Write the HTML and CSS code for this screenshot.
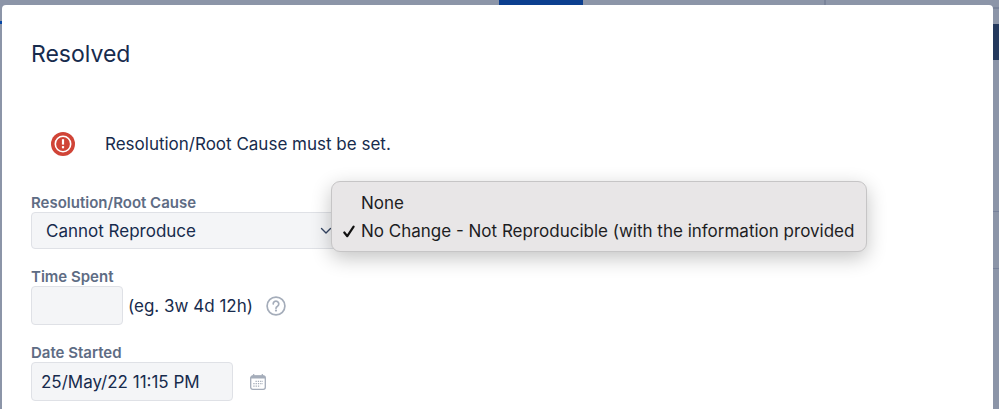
FILE: index.html
```
<!DOCTYPE html>
<html lang="en">
<head>
  <meta charset="UTF-8">
  <title>Resolved</title>
  <link rel="stylesheet" href="styles.css">
</head>
<body>
  <main class="dialog" role="dialog" aria-labelledby="dialogTitle">
    <h2 class="dialog-title" id="dialogTitle">Resolved</h2>

    <div class="error-message" role="alert">
      <svg class="error-icon" viewBox="0 0 24 24" aria-hidden="true">
        <circle cx="12" cy="12" r="12" fill="#d04437"/>
        <circle cx="12" cy="12" r="7.7" fill="none" stroke="#fff" stroke-width="1.6"/>
        <path d="M12 7.2v5.4" stroke="#fff" stroke-width="2.2"/>
        <path d="M12 14.1v2.2" stroke="#fff" stroke-width="2.2"/>
      </svg>
      <span>Resolution/Root Cause must be set.</span>
    </div>

    <form>
      <div class="field">
        <label for="resolution">Resolution/Root Cause</label>
        <div class="select-wrap">
          <select class="control" id="resolution">
            <option>Cannot Reproduce</option>
          </select>
          <svg class="chevron" viewBox="0 0 12 8" aria-hidden="true">
            <path d="M1.5 1.5L6 6l4.5-4.5" fill="none" stroke="#344563" stroke-width="1.4" stroke-linecap="round" stroke-linejoin="round"/>
          </svg>
          <ul class="menu" role="listbox" aria-label="Resolution/Root Cause">
            <li role="option" aria-selected="false">None</li>
            <li role="option" aria-selected="true">
              <svg class="check" viewBox="0 0 12 13" aria-hidden="true">
                <path d="M1.3 7.5L4.3 11.2L10.6 1.6" fill="none" stroke="#111" stroke-width="2.2" stroke-linecap="round" stroke-linejoin="round"/>
              </svg>
              No Change - Not Reproducible (with the information provided
            </li>
          </ul>
        </div>
      </div>

      <div class="field">
        <label for="timeSpent">Time Spent</label>
        <div class="row">
          <input class="control time-input" id="timeSpent" type="text">
          <span class="hint">(eg. 3w 4d 12h)</span>
          <button class="icon-btn" type="button" aria-label="Help">
            <svg width="20" height="20" viewBox="0 0 20 20" fill="none" stroke="#a5adba" stroke-width="1.7">
              <circle cx="10" cy="10" r="8.9"/>
              <path d="M7.2 8a2.8 2.8 0 1 1 4.3 2.3c-1 .6-1.5 1-1.5 2" stroke-linecap="round"/>
              <circle cx="10" cy="14.6" r="1.1" fill="#a5adba" stroke="none"/>
            </svg>
          </button>
        </div>
      </div>

      <div class="field">
        <label for="dateStarted">Date Started</label>
        <div class="row">
          <input class="control date-input" id="dateStarted" type="text" value="25/May/22 11:15 PM">
          <button class="icon-btn calendar-btn" type="button" aria-label="Select a date">
            <svg width="16" height="16" viewBox="0 0 16 16">
              <rect x=".7" y="2" width="14.6" height="13.3" rx="2" fill="none" stroke="#a5adba" stroke-width="1.3"/>
              <path d="M.7 4.5V3.5a2 2 0 0 1 2-2h10.6a2 2 0 0 1 2 2v1z" fill="#a5adba"/>
              <path d="M3.7 0v2M12.3 0v2" stroke="#a5adba" stroke-width="1.2"/>
              <path d="M5.5 7.3h7.5M3.3 9.7h9.7M3.3 12.1h7" stroke="#a5adba" stroke-width="1.2" stroke-dasharray="1.3 1"/>
            </svg>
          </button>
        </div>
      </div>
    </form>
  </main>
</body>
</html>
```
FILE: styles.css
```
* {
  box-sizing: border-box;
}
html {
  height: 100%;
  overflow: hidden;
}
/* dimmed page behind the dialog */
body {
  display: flex;
  min-height: 100%;
  margin: 0;
  padding: 5px 6px 0 2px;
  font-family: Inter, "Liberation Sans", sans-serif;
  font-size: 17px;
  line-height: 24px;
  color: #172b4d;
  background-color: #8c95a8;
  background-image:
    linear-gradient(#0c3f8f, #0c3f8f),
    linear-gradient(#7a849a, #7a849a),
    linear-gradient(#0747a6, #0747a6),
    linear-gradient(#253a5e, #253a5e),
    linear-gradient(#7a849a, #7a849a),
    linear-gradient(#77819a, #77819a),
    linear-gradient(#77819a, #77819a);
  background-repeat: no-repeat;
  background-size: 84px 5px, 2px 5px, 2px 3px, 6px 36px, 6px 2px, 6px 1px, 6px 1px;
  background-position: 499px 0, 824px 0, 0 21px, right 24px, right 7px, right 211px, right 268px;
}
.dialog {
  flex: 1;
  padding: 33px 29px 0;
  background-color: #fff;
  border-radius: 4px 4px 0 0;
}
.dialog-title {
  margin: 0;
  font-size: 23px;
  font-weight: 400;
  line-height: 32px;
}
.error-message {
  display: flex;
  align-items: center;
  gap: 30px;
  margin: 56px 0 0 20px;
  line-height: 36px;
}
.error-icon {
  width: 24px;
  height: 24px;
}
form {
  margin-top: 31px;
}
.field {
  margin-bottom: 18px;
}
.field label {
  display: block;
  font-size: 15px;
  font-weight: 600;
  line-height: 19px;
  color: #5e6c84;
}
.control {
  height: 39px;
  padding: 0 9px;
  font: inherit;
  color: #172b4d;
  background-color: #f4f5f7;
  border: 1px solid #dfe1e6;
  border-radius: 4px;
}
.select-wrap {
  position: relative;
}
.select-wrap .control {
  display: block;
  width: 310px;
  height: 37px;
  padding: 0 14px;
  appearance: none;
}
.chevron {
  position: absolute;
  top: 15px;
  left: 289px;
  width: 12px;
  height: 8px;
}
.menu {
  position: absolute;
  top: -31px;
  left: 300px;
  margin: 0;
  padding: 7px 12px 6px 29px;
  list-style: none;
  line-height: 28px;
  white-space: nowrap;
  color: #1d1d1f;
  background-color: #e8e6e7;
  border: 1px solid #c6c5c6;
  border-radius: 9px;
  box-shadow: 0 6px 20px rgba(0, 0, 0, 0.24);
}
.menu li {
  position: relative;
}
.check {
  position: absolute;
  top: 8px;
  left: -18px;
  width: 12px;
  height: 13px;
}
.row {
  display: flex;
  align-items: center;
}
.time-input {
  width: 92px;
}
.hint {
  margin-left: 5px;
}
.date-input {
  width: 202px;
}
.icon-btn {
  display: flex;
  margin-left: 13px;
  padding: 0;
  background: none;
  border: none;
  cursor: pointer;
}
.calendar-btn {
  margin-left: 17px;
}
```
